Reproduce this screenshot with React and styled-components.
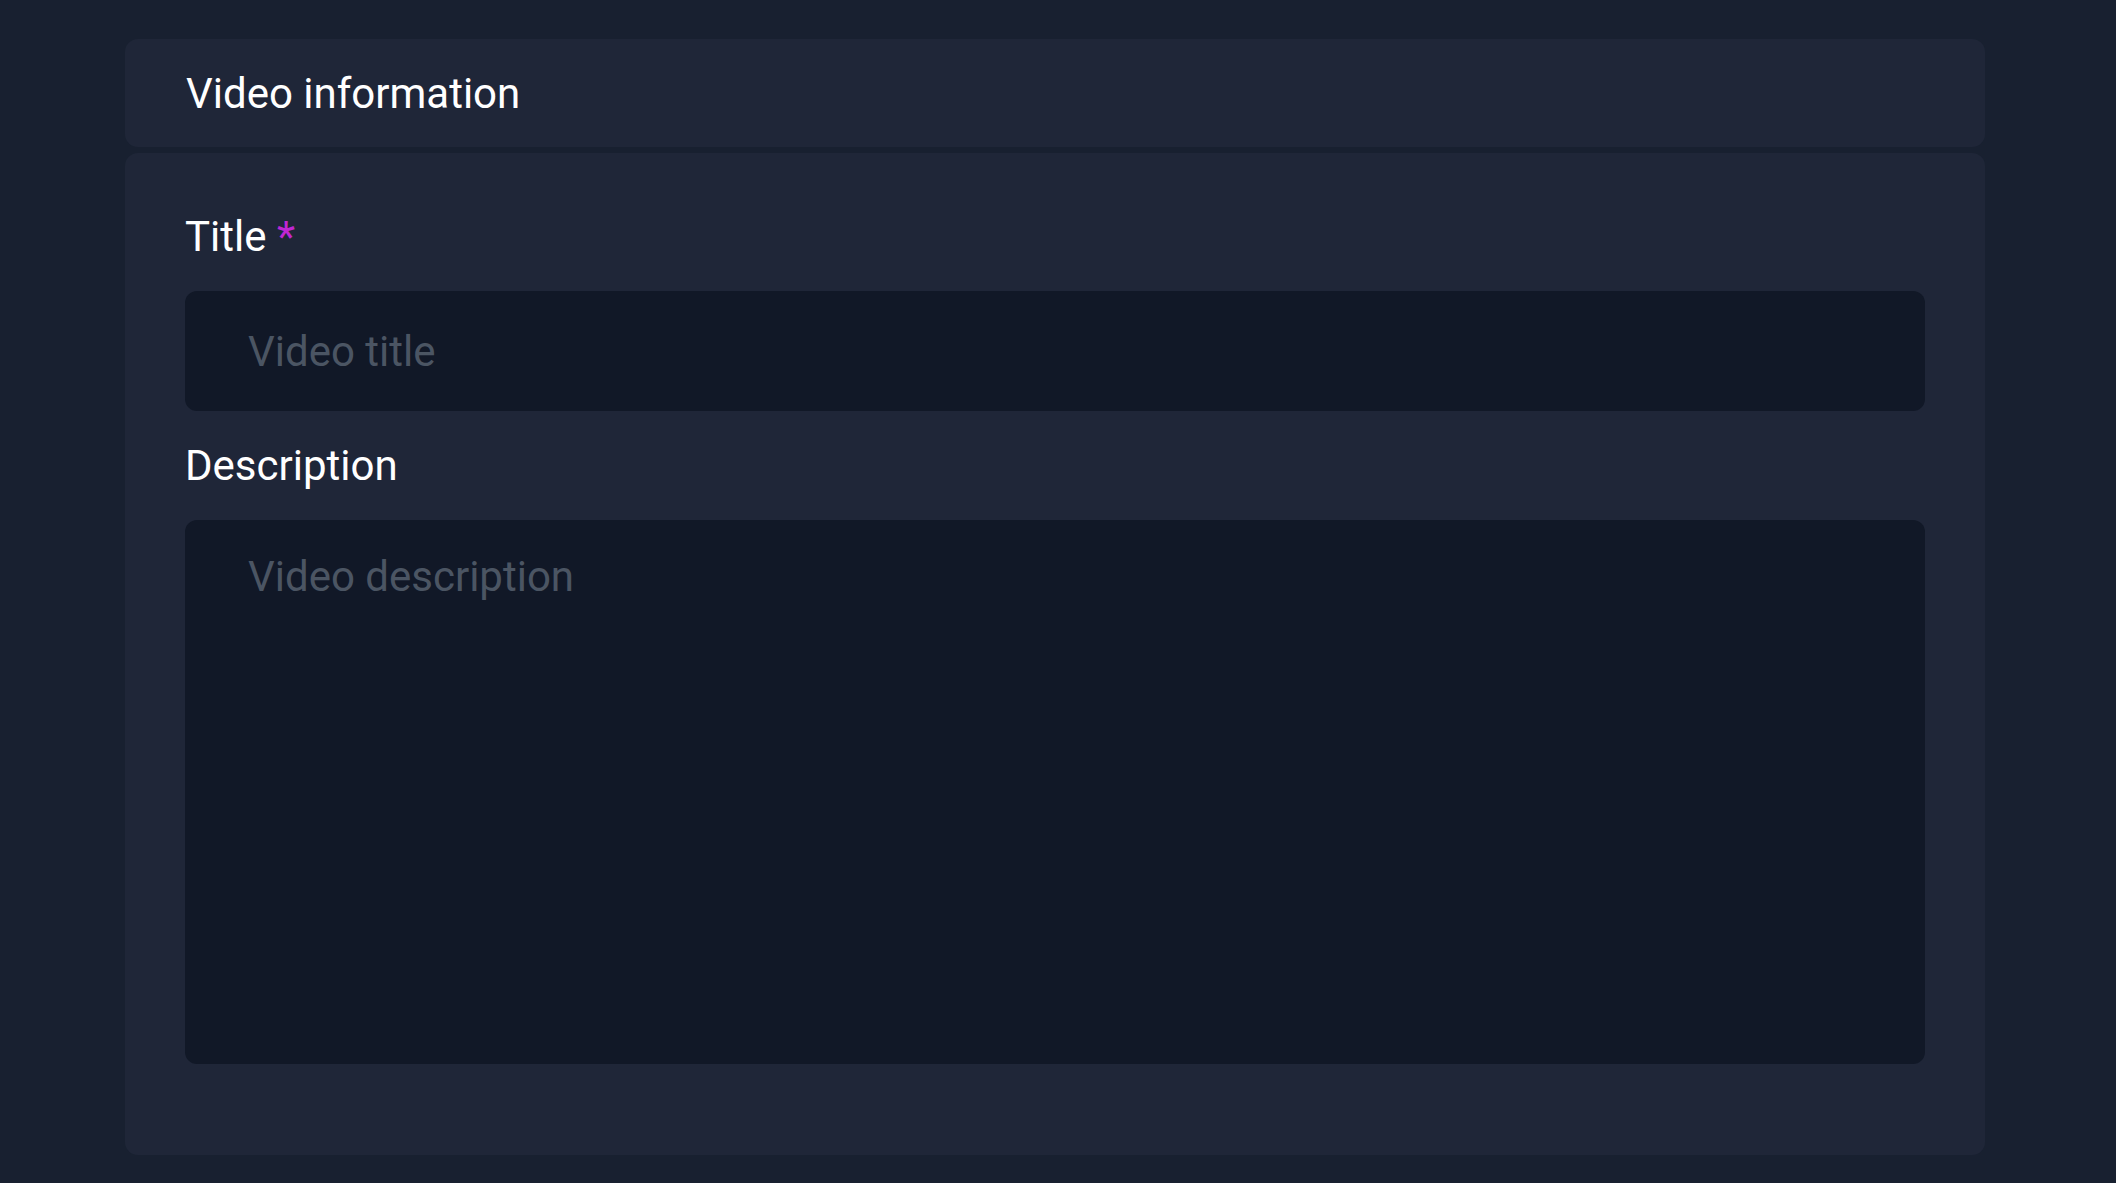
import styled, { createGlobalStyle } from "styled-components"

const GlobalStyle = createGlobalStyle`
    html, body {
        margin: 0;
        padding: 0;
        background: #182030;
    }
    body {
        font-family: Roboto, "Liberation Sans", sans-serif;
    }
    * {
        box-sizing: border-box;
    }
`

export default function App() {
    return (
        <>
            <GlobalStyle />
            <Page>
                <HeaderCard>
                    <Heading>Video information</Heading>
                </HeaderCard>
                <FormCard>
                    <Field>
                        <Label htmlFor='video-title'>
                            Title <Required>*</Required>
                        </Label>
                        <TextInput
                            id='video-title'
                            type='text'
                            placeholder='Video title'
                        />
                    </Field>
                    <Field>
                        <Label htmlFor='video-description'>Description</Label>
                        <TextArea
                            id='video-description'
                            placeholder='Video description'
                        />
                    </Field>
                </FormCard>
            </Page>
        </>
    )
}

const Page = styled.div`
    display: flex;
    flex-direction: column;
    gap: 6px;
    padding: 39px 0 28px 125px;
`

const HeaderCard = styled.div`
    width: 1860px;
    height: 108px;
    display: flex;
    align-items: center;
    padding: 2px 61px 0;
    border-radius: 13px;
    background: #1f2638;
`

const Heading = styled.h1`
    margin: 0;
    font-size: 42px;
    font-weight: 400;
    line-height: 1;
    color: #ffffff;
`

const FormCard = styled.div`
    width: 1860px;
    display: flex;
    flex-direction: column;
    gap: 30px;
    padding: 59px 60px 91px;
    border-radius: 13px;
    background: #1f2638;
`

const Field = styled.div`
    display: flex;
    flex-direction: column;
    gap: 29px;
`

const Label = styled.label`
    font-size: 42px;
    font-weight: 400;
    line-height: 50px;
    color: #ffffff;
`

const Required = styled.span`
    color: #c026d3;
`

const fieldStyles = `
    width: 100%;
    border: none;
    outline: none;
    border-radius: 12px;
    background: #111827;
    color: #e5e7eb;
    font-family: Roboto, "Liberation Sans", sans-serif;
    font-size: 42px;
    &::placeholder {
        color: #4b5563;
    }
`

const TextInput = styled.input`
    ${fieldStyles}
    height: 120px;
    padding: 0 63px;
`

const TextArea = styled.textarea`
    ${fieldStyles}
    display: block;
    height: 544px;
    padding: 32px 63px;
    line-height: normal;
    resize: none;
`
